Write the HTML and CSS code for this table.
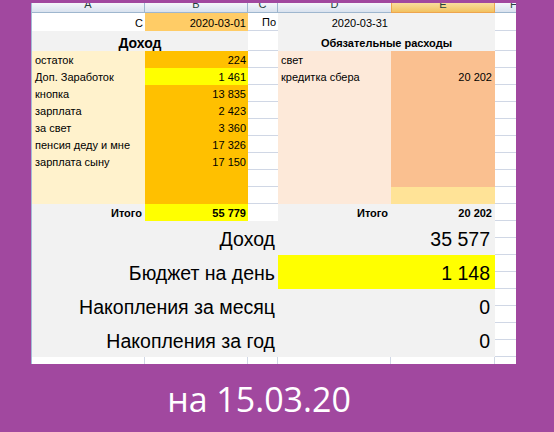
FILE: index.html
```html
<!DOCTYPE html>
<html lang="ru">
<head>
<meta charset="utf-8">
<title>Бюджет</title>
<link rel="stylesheet" href="styles.css">
</head>
<body>
<div class="sheet">
  <div class="hd">A</div>
  <div class="hd">B</div>
  <div class="hd">C</div>
  <div class="hd hd-d">D</div>
  <div class="hd hd-sel">E</div>
  <div class="hd hd-f">F</div>

  <div class="c r">С</div>
  <div class="c r date">2020-03-01</div>
  <div class="c r gl">По</div>
  <div class="c r grey pr3">2020-03-31</div>
  <div class="c grey"></div>
  <div class="c gl"></div>

  <div class="c grey span2 title">Доход</div>
  <div class="c gl"></div>
  <div class="c grey span2 title-s">Обязательные расходы</div>
  <div class="c gl"></div>

  <div class="c inc-l">остаток</div><div class="c r inc-v">224</div><div class="c gl"></div><div class="c exp-l">свет</div><div class="c r exp-v"></div><div class="c gl"></div>
  <div class="c inc-l">Доп. Заработок</div><div class="c r yel">1 461</div><div class="c gl"></div><div class="c exp-l">кредитка сбера</div><div class="c r exp-v pr3">20 202</div><div class="c gl"></div>
  <div class="c inc-l">кнопка</div><div class="c r inc-v">13 835</div><div class="c gl"></div><div class="c exp-l"></div><div class="c r exp-v"></div><div class="c gl"></div>
  <div class="c inc-l">зарплата</div><div class="c r inc-v">2 423</div><div class="c gl"></div><div class="c exp-l"></div><div class="c r exp-v"></div><div class="c gl"></div>
  <div class="c inc-l">за свет</div><div class="c r inc-v">3 360</div><div class="c gl"></div><div class="c exp-l"></div><div class="c r exp-v"></div><div class="c gl"></div>
  <div class="c inc-l">пенсия деду и мне</div><div class="c r inc-v">17 326</div><div class="c gl"></div><div class="c exp-l"></div><div class="c r exp-v"></div><div class="c gl"></div>
  <div class="c inc-l">зарплата сыну</div><div class="c r inc-v">17 150</div><div class="c gl"></div><div class="c exp-l"></div><div class="c r exp-v"></div><div class="c gl"></div>
  <div class="c inc-l"></div><div class="c r inc-v"></div><div class="c gl"></div><div class="c exp-l"></div><div class="c r exp-v"></div><div class="c gl"></div>
  <div class="c inc-l"></div><div class="c r inc-v"></div><div class="c gl"></div><div class="c exp-l"></div><div class="c r exp-last"></div><div class="c gl"></div>

  <div class="c r grey b pr3">Итого</div>
  <div class="c r yel b">55 779</div>
  <div class="c"></div>
  <div class="c r grey b pr3">Итого</div>
  <div class="c r grey b pr3">20 202</div>
  <div class="c gl"></div>

  <div class="big-l">Доход</div><div class="big-v">35 577</div><div class="c gl"></div><div class="c gl"></div>
  <div class="big-l">Бюджет на день</div><div class="big-v big-yel">1 148</div><div class="c gl"></div><div class="c gl"></div>
  <div class="big-l">Накопления за месяц</div><div class="big-v">0</div><div class="c gl"></div><div class="c gl"></div>
  <div class="big-l">Накопления за год</div><div class="big-v">0</div><div class="c gl"></div><div class="c gl"></div>

  <div class="c vl"></div><div class="c vl"></div><div class="c vl"></div><div class="c vl"></div><div class="c vl"></div><div class="c"></div>
</div>
<div class="caption">на 15.03.20</div>
</body>
</html>
```

FILE: styles.css
```css
* {
  box-sizing: border-box;
}

body {
  margin: 0;
  padding-top: 3px;
  background: #a1489f;
  font-family: "Liberation Sans", Arial, sans-serif;
}

.sheet {
  margin-left: 31px;
  width: 485px;
  border-left: 1px solid #a4bbd6;
  background: #fff;
  display: grid;
  grid-template-columns: 113px 103px 30px 113px 104px 21px;
  grid-template-rows: 10px 18px 20px repeat(9, 17px) 17px repeat(8, 17px) 7px;
  font-size: 11px;
  color: #000;
}

.hd {
  background: linear-gradient(#f4f7fb, #d9e2ee);
  border-right: 1px solid #9eb6ce;
  border-bottom: 1px solid #9eb6ce;
  text-align: center;
  line-height: 3px;
  overflow: hidden;
  color: #27413e;
  font-size: 11px;
}

.hd-d {
  border-right: 0;
}

.hd-sel {
  background: linear-gradient(#f9dd9f, #f2c260);
  border: 1px solid #eea54e;
  border-top: 0;
}

.hd-f {
  border-right: 0;
  text-align: left;
  padding-left: 15px;
}

.c {
  display: flex;
  align-items: flex-end;
  line-height: 13px;
  padding: 0 3px 1px 3px;
  white-space: nowrap;
  overflow: hidden;
}

.r {
  justify-content: flex-end;
  padding-right: 2px;
}

.pr3 {
  padding-right: 3px;
}

.b {
  font-weight: bold;
}

.gl {
  border-bottom: 1px solid #d0d7e5;
}

.vl {
  border-right: 1px solid #d0d7e5;
}

.grey {
  background: #f2f2f2;
}

.date {
  background: #ffcc66;
}

.span2 {
  grid-column: span 2;
  justify-content: center;
}

.title {
  font-size: 14px;
  font-weight: bold;
  line-height: 16px;
  padding-bottom: 0;
}

.title-s {
  font-weight: bold;
}

.inc-l {
  background: #fff2cc;
}

.inc-v {
  background: #ffc000;
}

.yel {
  background: #ffff00;
}

.exp-l {
  background: #fde9d9;
}

.exp-v {
  background: #fac090;
}

.exp-last {
  background: #ffe397;
}

.big-l,
.big-v {
  grid-row: span 2;
  display: flex;
  align-items: center;
  justify-content: flex-end;
  background: #f2f2f2;
  font-size: 19.5px;
  line-height: 34px;
  padding-top: 1px;
  white-space: nowrap;
}

.big-l {
  grid-column: span 3;
  padding-right: 3px;
}

.big-v {
  grid-column: span 2;
  padding-right: 5px;
}

.big-yel {
  background: #ffff00;
}

.caption {
  padding: 11px 36px 0 0;
  text-align: center;
  color: #fff;
  font-family: "Open Sans", "Noto Sans", sans-serif;
  font-size: 34px;
  line-height: 48px;
}
```
